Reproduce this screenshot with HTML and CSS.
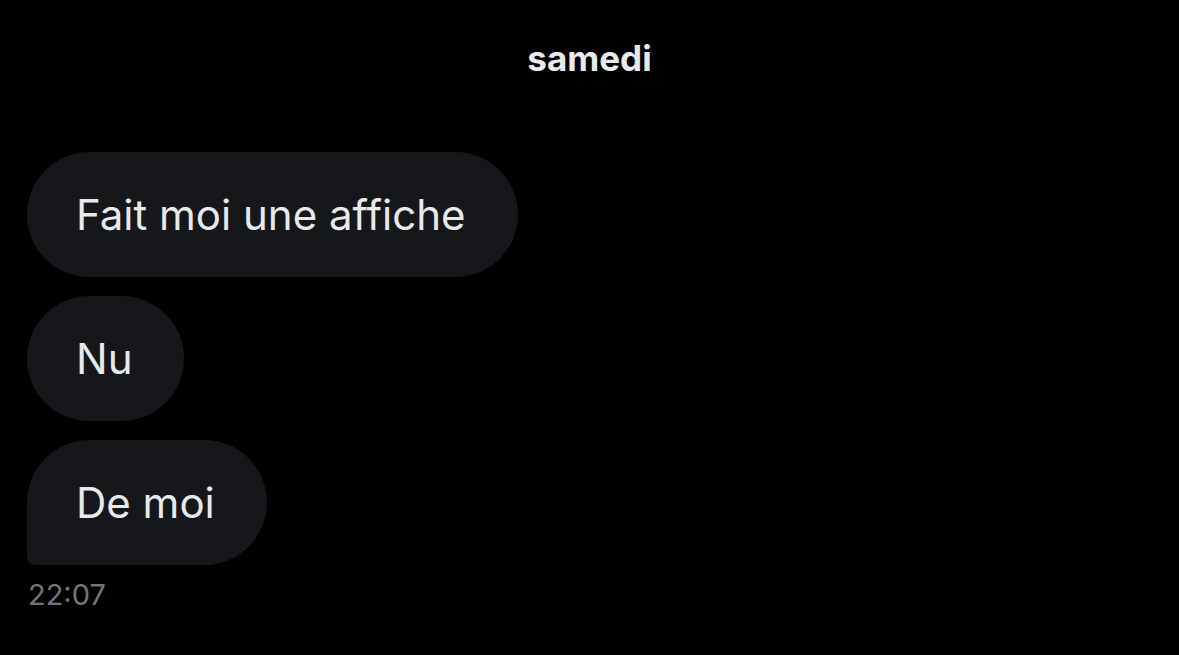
FILE: index.html
```html
<!DOCTYPE html>
<html lang="fr">
<head>
<meta charset="utf-8">
<link rel="stylesheet" href="styles.css">
</head>
<body>
<div class="chat">
  <div class="day">samedi</div>
  <div class="messages">
    <div class="bubble">Fait moi une affiche</div>
    <div class="bubble">Nu</div>
    <div class="bubble last">De moi</div>
  </div>
  <div class="time">22:07</div>
</div>
</body>
</html>
```
FILE: styles.css
```css
html, body {
  margin: 0;
  padding: 0;
  background: #000;
  width: 1179px;
  height: 655px;
  overflow: hidden;
}
.chat {
  font-family: Inter, "Liberation Sans", sans-serif;
  color: #e7e9ea;
  display: flex;
  flex-direction: column;
  padding: 36px 27px 0;
}
.day {
  text-align: center;
  font-weight: 700;
  font-size: 35px;
  line-height: 44px;
  color: #e7e9ea;
}
.messages {
  display: flex;
  flex-direction: column;
  align-items: flex-start;
  gap: 19px;
  margin-top: 72px;
}
.bubble {
  background: #16171a;
  border-radius: 63px;
  height: 125px;
  box-sizing: border-box;
  padding: 0 52px 0 49px;
  display: flex;
  align-items: center;
  font-size: 42px;
  color: #e7e9ea;
}
.bubble.last {
  border-bottom-left-radius: 8px;
}
.time {
  margin-top: 12px;
  font-size: 29px;
  line-height: 36px;
  color: #71767b;
  padding-left: 1px;
}
```
